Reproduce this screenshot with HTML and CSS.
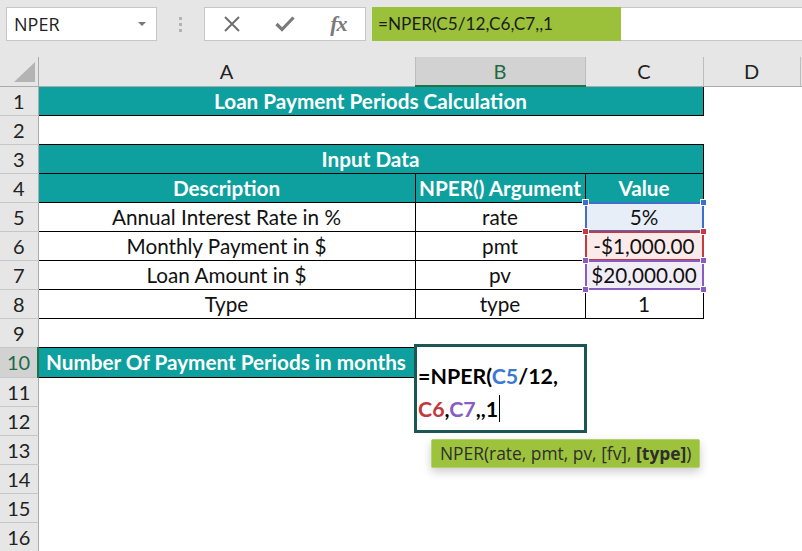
FILE: index.html
```html
<!DOCTYPE html>
<html lang="en">
<head>
    <meta charset="UTF-8">
    <title>NPER</title>
    <link rel="stylesheet" href="styles.css">
</head>
<body>
    <div class="toolbar">
        <div class="namebox"><span>NPER</span><span class="caret"></span></div>
        <div class="grip"><i></i><i></i><i></i></div>
        <div class="fxbtns">
            <span class="btn">
                <svg width="18" height="18" viewBox="0 0 18 18"><path d="M2 2 L16 16 M16 2 L2 16" stroke="#707070" stroke-width="2" fill="none"/></svg>
            </span>
            <span class="btn">
                <svg width="20" height="16" viewBox="0 0 20 16"><path d="M1.5 8 L7 13.5 L18.5 1.5" stroke="#7a7a7a" stroke-width="3.2" fill="none"/></svg>
            </span>
            <span class="btn fx"><i>f</i><i>x</i></span>
        </div>
        <div class="formula">=NPER(C5/12,C6,C7,,1</div>
        <div class="formula-rest"></div>
    </div>

    <div class="sheet">
        <table>
            <colgroup>
                <col style="width:38px"><col style="width:377px"><col style="width:170px"><col style="width:118px"><col style="width:97px"><col>
            </colgroup>
            <tr class="hdr">
                <th class="corner"><svg width="38" height="28" viewBox="0 0 38 28"><polygon points="35,5 35,25 14,25" fill="#b4b4b4"/></svg></th>
                <th class="ch">A</th>
                <th class="ch sel">B</th>
                <th class="ch">C</th>
                <th class="ch">D</th>
                <th class="ch end"></th>
            </tr>
            <tr>
                <td class="rh">1</td>
                <td colspan="3" class="teal bd">Loan Payment Periods Calculation</td>
                <td></td><td></td>
            </tr>
            <tr>
                <td class="rh">2</td>
                <td></td><td></td><td></td><td></td><td></td>
            </tr>
            <tr>
                <td class="rh">3</td>
                <td colspan="3" class="teal bd">Input Data</td>
                <td></td><td></td>
            </tr>
            <tr>
                <td class="rh">4</td>
                <td class="teal bd">Description</td>
                <td class="teal bd">NPER() Argument</td>
                <td class="teal bd">Value</td>
                <td></td><td></td>
            </tr>
            <tr>
                <td class="rh">5</td>
                <td class="bd">Annual Interest Rate in %</td>
                <td class="bd">rate</td>
                <td class="bd ref blue"><div class="box"><b class="h tl"></b><b class="h tr"></b><b class="h bl"></b><b class="h br"></b></div><span class="val">5%</span></td>
                <td></td><td></td>
            </tr>
            <tr>
                <td class="rh">6</td>
                <td class="bd">Monthly Payment in $</td>
                <td class="bd">pmt</td>
                <td class="bd ref red"><div class="box"><b class="h tl"></b><b class="h tr"></b><b class="h bl"></b><b class="h br"></b></div><span class="val">-$1,000.00</span></td>
                <td></td><td></td>
            </tr>
            <tr>
                <td class="rh">7</td>
                <td class="bd">Loan Amount in $</td>
                <td class="bd">pv</td>
                <td class="bd ref purple"><div class="box"><b class="h tl"></b><b class="h tr"></b><b class="h bl"></b><b class="h br"></b></div><span class="val">$20,000.00</span></td>
                <td></td><td></td>
            </tr>
            <tr>
                <td class="rh">8</td>
                <td class="bd">Type</td>
                <td class="bd">type</td>
                <td class="bd">1</td>
                <td></td><td></td>
            </tr>
            <tr>
                <td class="rh">9</td>
                <td></td><td></td><td></td><td></td><td></td>
            </tr>
            <tr class="tall">
                <td class="rh sel">10</td>
                <td class="teal bd left">Number Of Payment Periods in months</td>
                <td></td><td></td><td></td><td></td>
            </tr>
            <tr><td class="rh">11</td><td></td><td></td><td></td><td></td><td></td></tr>
            <tr><td class="rh">12</td><td></td><td></td><td></td><td></td><td></td></tr>
            <tr><td class="rh">13</td><td></td><td></td><td></td><td></td><td></td></tr>
            <tr><td class="rh">14</td><td></td><td></td><td></td><td></td><td></td></tr>
            <tr><td class="rh">15</td><td></td><td></td><td></td><td></td><td></td></tr>
            <tr><td class="rh">16</td><td></td><td></td><td></td><td></td><td></td></tr>
        </table>

        <div class="editor">
            <div>=NPER(<span class="c-blue">C5</span>/12,</div>
            <div><span class="c-red">C6</span>,<span class="c-purple">C7</span>,,1<span class="cursor"></span></div>
        </div>

        <div class="tip">NPER(rate, pmt, pv, [fv], <b>[type]</b>)</div>
    </div>
</body>
</html>
```

FILE: styles.css
```css
body {
    margin: 0;
    background-color: #fff;
    font-family: Lato, "Liberation Sans", sans-serif;
    overflow: hidden;
}

/* formula bar */
.toolbar {
    display: flex;
    align-items: flex-start;
    height: 57px;
    padding-top: 7px;
    box-sizing: border-box;
    background-color: #e6e6e6;
}

.namebox {
    margin-left: 6px;
    width: 151px;
    height: 34px;
    box-sizing: border-box;
    background-color: #fff;
    border: 1px solid #c6c6c6;
    display: flex;
    align-items: center;
    justify-content: space-between;
    padding: 0 10px 0 7px;
    font-family: "Open Sans", sans-serif;
    font-size: 18px;
    color: #222;
}

.caret {
    border-left: 4px solid transparent;
    border-right: 4px solid transparent;
    border-top: 4px solid #777;
}

.grip {
    width: 47px;
    height: 34px;
    display: flex;
    flex-direction: column;
    align-items: center;
    justify-content: center;
    gap: 3px;
}

.grip i {
    width: 3px;
    height: 3px;
    background-color: #b3b3b3;
}

.fxbtns {
    width: 162px;
    height: 34px;
    box-sizing: border-box;
    background-color: #fff;
    border: 1px solid #c6c6c6;
    display: flex;
    align-items: center;
}

.btn {
    width: 54px;
    display: flex;
    justify-content: center;
    align-items: center;
}

.btn svg {
    display: block;
}

.fx {
    font-family: "Liberation Serif", serif;
    font-size: 22px;
    color: #7a7a7a;
    font-weight: bold;
    letter-spacing: -1px;
}

.formula {
    margin-left: 6px;
    width: 249px;
    height: 34px;
    box-sizing: border-box;
    background-color: #9bc13b;
    padding-left: 6px;
    line-height: 34px;
    font-size: 17.2px;
    color: #1c1c1c;
}

.formula-rest {
    flex: 1;
    height: 34px;
    box-sizing: border-box;
    background-color: #fff;
    border-top: 1px solid #c6c6c6;
    border-bottom: 1px solid #c6c6c6;
}

/* grid */
.sheet {
    position: relative;
}

table {
    border-collapse: collapse;
    table-layout: fixed;
    width: 802px;
}

tr {
    height: 29px;
}

tr.tall {
    height: 30px;
}

th, td {
    padding: 0;
    text-align: center;
    font-size: 20.7px;
    color: #111;
    white-space: nowrap;
    overflow: visible;
}

.corner {
    background-color: #e6e6e6;
    border-right: 1px solid #ababab;
    border-bottom: 1px solid #ababab;
}

.corner svg {
    display: block;
}

.ch {
    background-color: #e6e6e6;
    border-right: 1px solid #bdbdbd;
    border-bottom: 1px solid #ababab;
    font-weight: normal;
    font-size: 20px;
    color: #222;
}

.ch.end {
    border-right: none;
}

.ch.sel {
    background-color: #d2d2d2;
    color: #1e6b43;
    border-bottom: 2px solid #217346;
}

.rh {
    background-color: #e6e6e6;
    border-right: 1px solid #ababab;
    border-bottom: 1px solid #c6c6c6;
    font-size: 20px;
    color: #222;
}

.rh.sel {
    background-color: #d2d2d2;
    color: #1e6b43;
    border-right: 2px solid #217346;
}

.bd {
    border: 1px solid #000;
}

.teal {
    background-color: #0ea09e;
    color: #fff;
    font-weight: bold;
}

.teal.left {
    text-align: left;
    padding-left: 7px;
}

/* formula reference ranges */
.ref {
    position: relative;
}

.ref .val {
    position: relative;
}

.box {
    position: absolute;
    left: -1px;
    right: -1px;
    top: -1px;
    bottom: -1px;
    border: 2px solid var(--c);
    background-color: var(--bg);
}

.blue { --c: #3f6fce; --bg: #e8eef8; }
.red { --c: #c9383f; --bg: #fbeaea; }
.purple { --c: #8a5cc0; --bg: #f1edf7; }

.h {
    position: absolute;
    width: 5px;
    height: 5px;
    background-color: var(--c);
    border: 1px solid #fff;
}

.h.tl { left: -5px; top: -5px; }
.h.tr { right: -5px; top: -5px; }
.h.bl { left: -5px; bottom: -5px; }
.h.br { right: -5px; bottom: -5px; }

/* in-cell editor */
.editor {
    position: absolute;
    left: 414px;
    top: 287px;
    width: 173px;
    height: 89px;
    box-sizing: border-box;
    border: 3px solid #1d5753;
    background-color: #fff;
    padding: 13px 0 0 1px;
    font-size: 21.4px;
    font-weight: bold;
    line-height: 33px;
    color: #000;
}

.c-blue { color: #3a78d2; }
.c-red { color: #c2383d; }
.c-purple { color: #8a5cc4; }

.cursor {
    display: inline-block;
    width: 1px;
    height: 27px;
    background-color: #000;
    vertical-align: -5px;
    margin-left: 1px;
}

.tip {
    position: absolute;
    left: 431px;
    top: 382px;
    width: 269px;
    height: 29px;
    box-sizing: border-box;
    background-color: #9dc33d;
    border: 1px solid #b5cf73;
    border-radius: 2px;
    box-shadow: 0 4px 10px rgba(0, 0, 0, 0.2);
    padding-left: 8px;
    line-height: 27px;
    font-family: "Open Sans", sans-serif;
    font-size: 17.4px;
    color: #2e2e2e;
}
```
